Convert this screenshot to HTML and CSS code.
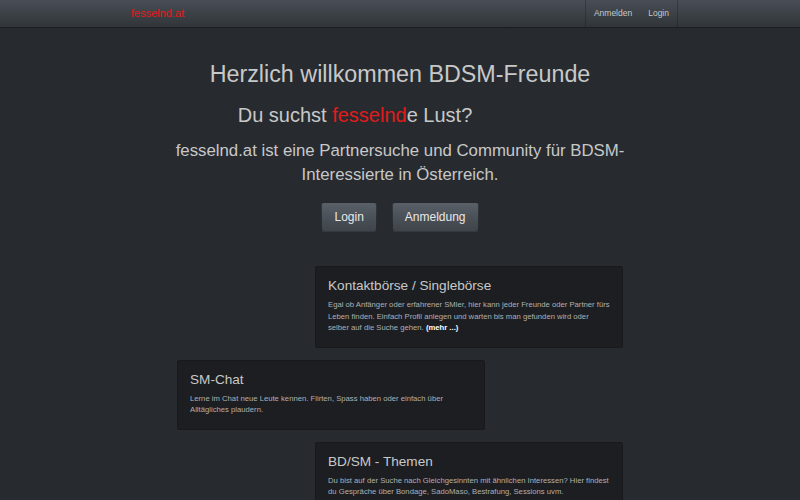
FILE: index.html
```html
<!DOCTYPE html>
<html lang="de">
<head>
  <meta charset="UTF-8">
  <meta name="viewport" content="width=device-width, initial-scale=1">
  <title>fesselnd.at</title>
  <link rel="stylesheet" href="styles.css">
</head>
<body>
  <div class="navbar">
    <div class="nav-inner">
      <a class="brand" href="#">fesselnd.at</a>
      <ul class="nav">
        <li><a href="#">Anmelden</a></li>
        <li><a href="#">Login</a></li>
      </ul>
    </div>
  </div>

  <div class="hero">
    <h1>Herzlich willkommen BDSM-Freunde</h1>
    <h2>Du suchst <span class="red">fesselnd</span>e Lust?</h2>
    <p class="lead">fesselnd.at ist eine Partnersuche und Community für BDSM-Interessierte in Österreich.</p>
    <div class="buttons">
      <a class="btn" href="#">Login</a>
      <a class="btn" href="#">Anmeldung</a>
    </div>
  </div>

  <div class="features">
    <div class="well right">
      <h3>Kontaktbörse / Singlebörse</h3>
      <p>Egal ob Anfänger oder erfahrener SMler, hier kann jeder Freunde oder Partner fürs Leben finden. Einfach Profil anlegen und warten bis man gefunden wird oder selber auf die Suche gehen. <a href="#">(mehr ...)</a></p>
    </div>
    <div class="well left">
      <h3>SM-Chat</h3>
      <p>Lerne im Chat neue Leute kennen. Flirten, Spass haben oder einfach über Alltägliches plaudern.</p>
    </div>
    <div class="well right">
      <h3>BD/SM - Themen</h3>
      <p>Du bist auf der Suche nach Gleichgesinnten mit ähnlichen Interessen? Hier findest du Gespräche über Bondage, SadoMaso, Bestrafung, Sessions uvm.</p>
    </div>
  </div>
</body>
</html>
```

FILE: styles.css
```css
body {
  font-family: 'Liberation Sans', Arial, sans-serif;
  background: #272b30;
  color: #c8c8c8;
  margin: 0;
  padding: 0;
}
a {
  text-decoration: none;
}
.navbar {
  height: 27px;
  background: linear-gradient(#484e55, #3a3f44 60%, #313539);
  border-bottom: 1px solid #1c1e22;
}
.nav-inner {
  width: 556px;
  margin: 0 auto;
  display: flex;
  justify-content: space-between;
  height: 27px;
}
.brand {
  color: #e01b1b;
  font-size: 11px;
  line-height: 27px;
  padding: 0 9px;
}
.nav {
  display: flex;
  list-style: none;
  margin: 0;
  padding: 0;
  border-left: 1px solid rgba(0,0,0,0.2);
  border-right: 1px solid rgba(0,0,0,0.2);
}
.nav a {
  display: block;
  color: #c8c8c8;
  font-size: 8.5px;
  line-height: 27px;
  padding: 0 8px;
}
.hero {
  text-align: center;
}
.hero h1 {
  font-size: 23.3px;
  font-weight: normal;
  margin: 33px 0 0;
  line-height: 26px;
}
.hero h2 {
  font-size: 20px;
  font-weight: normal;
  margin: 16px 90px 0 0;
  line-height: 24px;
}
.red {
  color: #e01b1b;
}
.lead {
  font-size: 16.8px;
  line-height: 24px;
  max-width: 480px;
  margin: 12px auto 0;
}
.buttons {
  display: flex;
  justify-content: center;
  gap: 15px;
  margin-top: 15px;
}
.btn {
  display: block;
  color: #e8e8e8;
  font-size: 12px;
  line-height: 28px;
  padding: 0 12px;
  border-radius: 3px;
  border: 1px solid rgba(0,0,0,0.4);
  background: linear-gradient(#5a6068, #484e55 60%, #3f444a);
}
.features {
  width: 446px;
  margin: 34px auto 0;
  display: flex;
  flex-direction: column;
  gap: 12px;
}
.well {
  width: 283px;
  padding: 7px 11px 13px 12px;
  background: #1c1e22;
  border: 1px solid #17191c;
  border-radius: 2px;
}
.well.right {
  align-self: flex-end;
}
.well.left {
  align-self: flex-start;
}
.well h3 {
  font-size: 13.6px;
  font-weight: normal;
  margin: 2px 0 3px;
  line-height: 20px;
}
.well p {
  font-size: 7.7px;
  line-height: 11.5px;
  margin: 0;
  color: #b0b0b0;
}
.well p a {
  color: #fff;
  font-weight: bold;
}
```
